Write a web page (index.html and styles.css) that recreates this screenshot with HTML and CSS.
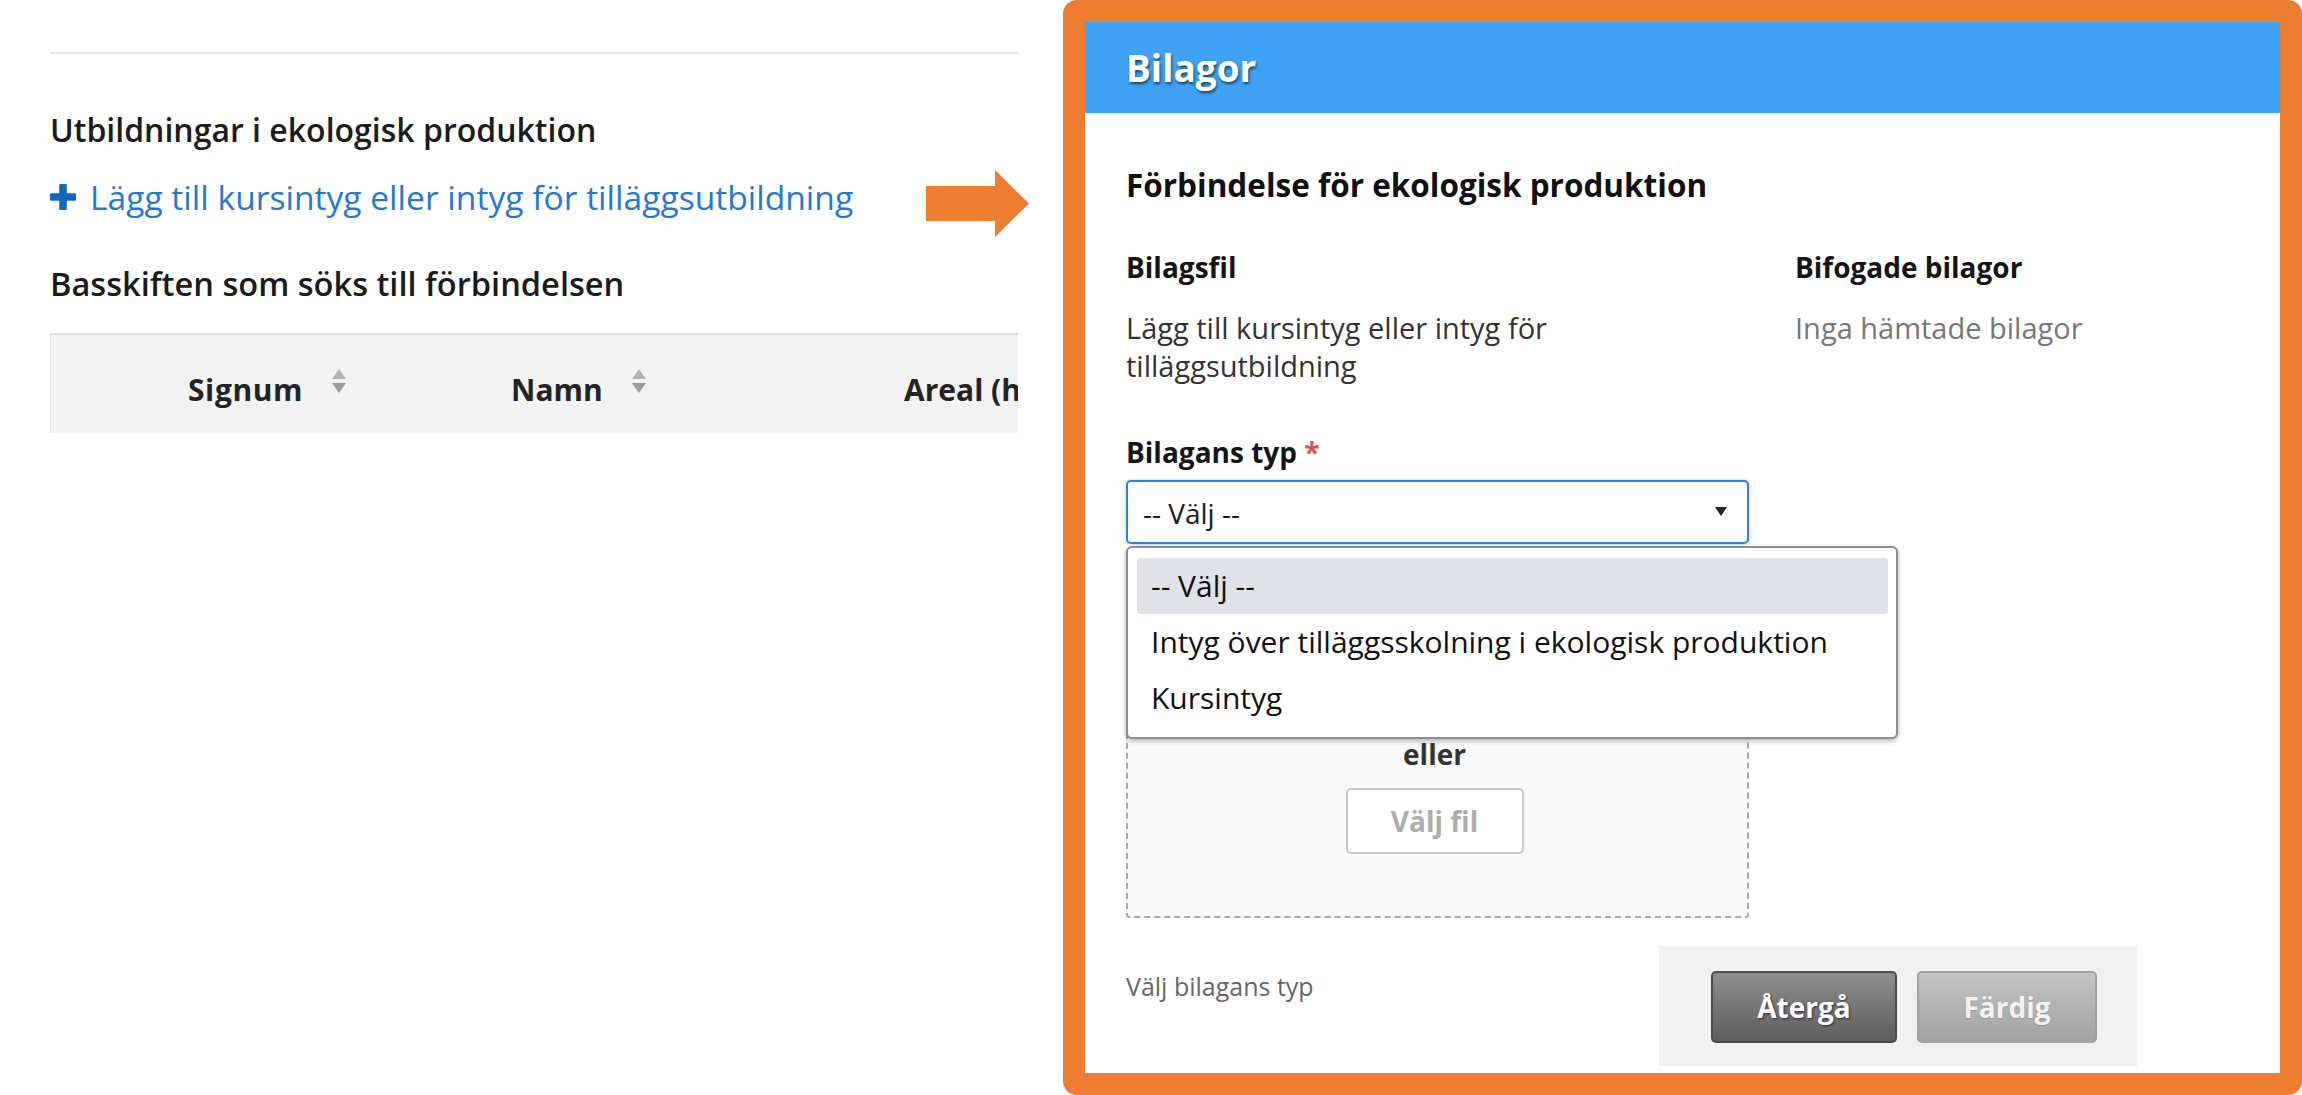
FILE: index.html
```html
<!DOCTYPE html>
<html lang="sv">
<head>
<meta charset="utf-8">
<title>Bilagor</title>
<link rel="stylesheet" href="styles.css">
</head>
<body>
<div class="page">
  <section class="left">
    <div class="left-inner">
      <div class="rule"></div>
      <h2 class="section-title">Utbildningar i ekologisk produktion</h2>
      <a class="add-link" href="#">
        <svg class="plus" viewBox="0 0 24 24" width="26" height="26" aria-hidden="true"><rect x="0" y="8.5" width="24" height="7" rx="1"/><rect x="8.5" y="0" width="7" height="24" rx="1"/></svg>
        <span>Lägg till kursintyg eller intyg för tilläggsutbildning</span>
      </a>
      <h2 class="section-title second">Basskiften som söks till förbindelsen</h2>
      <div class="table-head">
        <div class="th th-signum"><span>Signum</span><svg class="sort" viewBox="0 0 16 26" width="16" height="26" aria-hidden="true"><polygon points="1,11 8,1 15,11" class="up"/><polygon points="1,15 15,15 8,25" class="down"/></svg></div>
        <div class="th th-namn"><span>Namn</span><svg class="sort" viewBox="0 0 16 26" width="16" height="26" aria-hidden="true"><polygon points="1,11 8,1 15,11" class="up"/><polygon points="1,15 15,15 8,25" class="down"/></svg></div>
        <div class="th th-areal"><span>Areal (ha)</span></div>
      </div>
    </div>
    <svg class="callout-arrow" viewBox="0 0 103 67" width="103" height="67" aria-hidden="true"><polygon points="0,16 69,16 69,0 103,33.5 69,67 69,51 0,51"/></svg>
  </section>

  <section class="frame">
    <div class="dialog">
      <header class="dialog-header">Bilagor</header>
      <div class="dialog-body">
        <h3 class="form-title">Förbindelse för ekologisk produktion</h3>
        <div class="cols">
          <div class="col">
            <div class="col-title">Bilagsfil</div>
            <p class="col-text">Lägg till kursintyg eller intyg för tilläggsutbildning</p>
            <div class="field-label">Bilagans typ <span class="req">*</span></div>
            <div class="select-wrap">
              <div class="select">
                <span>-- Välj --</span>
                <svg class="caret" viewBox="0 0 12 9" width="12" height="9" aria-hidden="true"><polygon points="0,0 12,0 6,9"/></svg>
              </div>
              <ul class="dropdown">
                <li class="opt active">-- Välj --</li>
                <li class="opt">Intyg över tilläggsskolning i ekologisk produktion</li>
                <li class="opt">Kursintyg</li>
              </ul>
            </div>
            <div class="dropzone">
              <div class="or">eller</div>
              <button class="file-btn" type="button">Välj fil</button>
            </div>
          </div>
          <div class="col">
            <div class="col-title">Bifogade bilagor</div>
            <p class="col-text muted">Inga hämtade bilagor</p>
          </div>
        </div>
        <div class="footer">
          <div class="hint">Välj bilagans typ</div>
          <div class="actions">
            <button class="btn btn-back" type="button">Återgå</button>
            <button class="btn btn-done" type="button">Färdig</button>
          </div>
        </div>
      </div>
    </div>
  </section>
</div>
</body>
</html>
```

FILE: styles.css
```css
* { box-sizing: border-box; }
html, body { margin: 0; padding: 0; background: #fff; }
body {
  font-family: "Open Sans", "Noto Sans", "Liberation Sans", sans-serif;
  color: #1d1d1d;
}
.page {
  display: flex;
  width: 2302px;
  height: 1095px;
  overflow: hidden;
}

/* ---------- left page ---------- */
.left {
  position: relative;
  flex: none;
  width: 1063px;
  padding: 52px 0 0 50px;
}
.left-inner {
  width: 968px;
  overflow: hidden;
}
.rule {
  height: 2px;
  background: #e4e4e4;
}
.section-title {
  margin: 56px 0 0;
  font-size: 32px;
  line-height: 40px;
  font-weight: 600;
  color: #1b1b1b;
  white-space: nowrap;
}
.section-title.second {
  margin-top: 45px;
  font-size: 32.6px;
}
.add-link {
  display: flex;
  align-items: center;
  gap: 14px;
  margin-top: 25px;
  font-size: 33.6px;
  line-height: 44px;
  color: #2479cf;
  text-decoration: none;
  white-space: nowrap;
}
.plus { fill: #0d68c4; flex: none; }
.table-head {
  display: flex;
  align-items: flex-start;
  margin-top: 29px;
  height: 100px;
  padding: 12px 0 0 137px;
  background: #f2f2f2;
  border-top: 2px solid #dcdcdc;
  border-left: 1px solid #e3e3e3;
  white-space: nowrap;
}
.th {
  display: flex;
  align-items: flex-start;
  flex: none;
  font-size: 30px;
  line-height: 86px;
  font-weight: 700;
  color: #232323;
}
.th-signum { width: 323px; }
.th-namn { width: 393px; }
.th-signum span { letter-spacing: 0.6px; }
.sort { margin: 21px 0 0 28px; flex: none; }
.sort .up { fill: #b3b3b3; }
.sort .down { fill: #9c9c9c; }
.callout-arrow {
  position: absolute;
  left: 926px;
  top: 170px;
  fill: #ed7d31;
}

/* ---------- dialog ---------- */
.frame {
  flex: 1;
  background: #ed7d31;
  border-radius: 14px;
  padding: 22px;
}
.dialog {
  height: 100%;
  background: #fff;
  display: flex;
  flex-direction: column;
}
.dialog-header {
  height: 91px;
  line-height: 91px;
  padding-left: 41px;
  background: #3fa2f4;
  color: #fff;
  font-size: 37px;
  font-weight: 700;
  text-shadow: 1px 2px 3px rgba(0, 0, 0, 0.6);
  box-shadow: 0 2px 2px rgba(0, 0, 0, 0.06);
}
.dialog-body {
  flex: 1;
  padding: 52px 41px 0 41px;
}
.form-title {
  margin: 0;
  font-size: 31.5px;
  line-height: 40px;
  font-weight: 700;
  color: #111;
}
.cols {
  display: grid;
  grid-template-columns: 623px 1fr;
  column-gap: 46px;
  align-items: start;
  margin-top: 44px;
}
.col-title {
  font-size: 28px;
  line-height: 36px;
  font-weight: 700;
  color: #151515;
}
.col-text {
  margin: 24px 0 0;
  font-size: 29px;
  line-height: 38px;
  color: #333;
}
.col-text.muted { color: #777; }
.field-label {
  margin-top: 49px;
  font-size: 28px;
  line-height: 36px;
  font-weight: 700;
  color: #151515;
}
.req { color: #d9534f; }
.select-wrap {
  position: relative;
  margin-top: 10px;
}
.select {
  display: flex;
  align-items: center;
  justify-content: space-between;
  height: 64px;
  padding: 2px 20px 0 15px;
  border: 2px solid #2f80e0;
  border-radius: 5px;
  box-shadow: 0 0 3px rgba(47, 128, 224, 0.45);
  font-size: 28px;
  color: #1a1a1a;
}
.caret { fill: #222; margin-top: -4px; }
.dropdown {
  position: absolute;
  z-index: 5;
  top: 66px;
  left: 0;
  width: 772px;
  margin: 0;
  padding: 10px 8px 11px 9px;
  list-style: none;
  background: #fff;
  border: 2px solid #8e8e8e;
  border-radius: 6px;
  box-shadow: 0 2px 5px rgba(0, 0, 0, 0.3);
}
.opt {
  height: 56px;
  line-height: 56px;
  padding-left: 14px;
  font-size: 30px;
  color: #111;
  white-space: nowrap;
  border-radius: 3px;
}
.opt.active { background: #e1e1e8; }
.dropzone {
  margin-top: 24px;
  padding: 166px 6px 62px 0;
  display: flex;
  flex-direction: column;
  align-items: center;
  background: #fafafa;
  border: 2px dashed #a8a8a8;
  border-radius: 3px;
}
.or {
  font-size: 28px;
  line-height: 36px;
  font-weight: 700;
  color: #333;
}
.file-btn {
  margin-top: 16px;
  width: 178px;
  height: 66px;
  padding: 0;
  background: #fff;
  border: 2px solid #c9c9c9;
  border-radius: 5px;
  font-family: inherit;
  font-size: 28px;
  font-weight: 700;
  color: #adadad;
}
.footer {
  display: grid;
  grid-template-columns: 533px 478px;
  margin-top: 28px;
}
.hint {
  margin-top: 25px;
  font-size: 25px;
  line-height: 30px;
  color: #666;
}
.actions {
  display: flex;
  gap: 20px;
  height: 120px;
  padding: 25px 40px 0 52px;
  background: #f0f0f0;
}
.btn {
  height: 72px;
  padding: 0;
  border-radius: 5px;
  font-family: inherit;
  font-size: 28px;
  font-weight: 700;
  line-height: 68px;
}
.btn-back {
  width: 186px;
  color: #fff;
  background: linear-gradient(#8e8e8e, #5d5d5d);
  border: 2px solid #4b4b4b;
  text-shadow: 1px 1px 2px rgba(0, 0, 0, 0.6);
}
.btn-done {
  width: 180px;
  color: #f2f2f2;
  background: linear-gradient(#c3c3c3, #a2a2a2);
  border: 2px solid #a0a0a0;
  text-shadow: 0 1px 1px rgba(0, 0, 0, 0.15);
}
```
